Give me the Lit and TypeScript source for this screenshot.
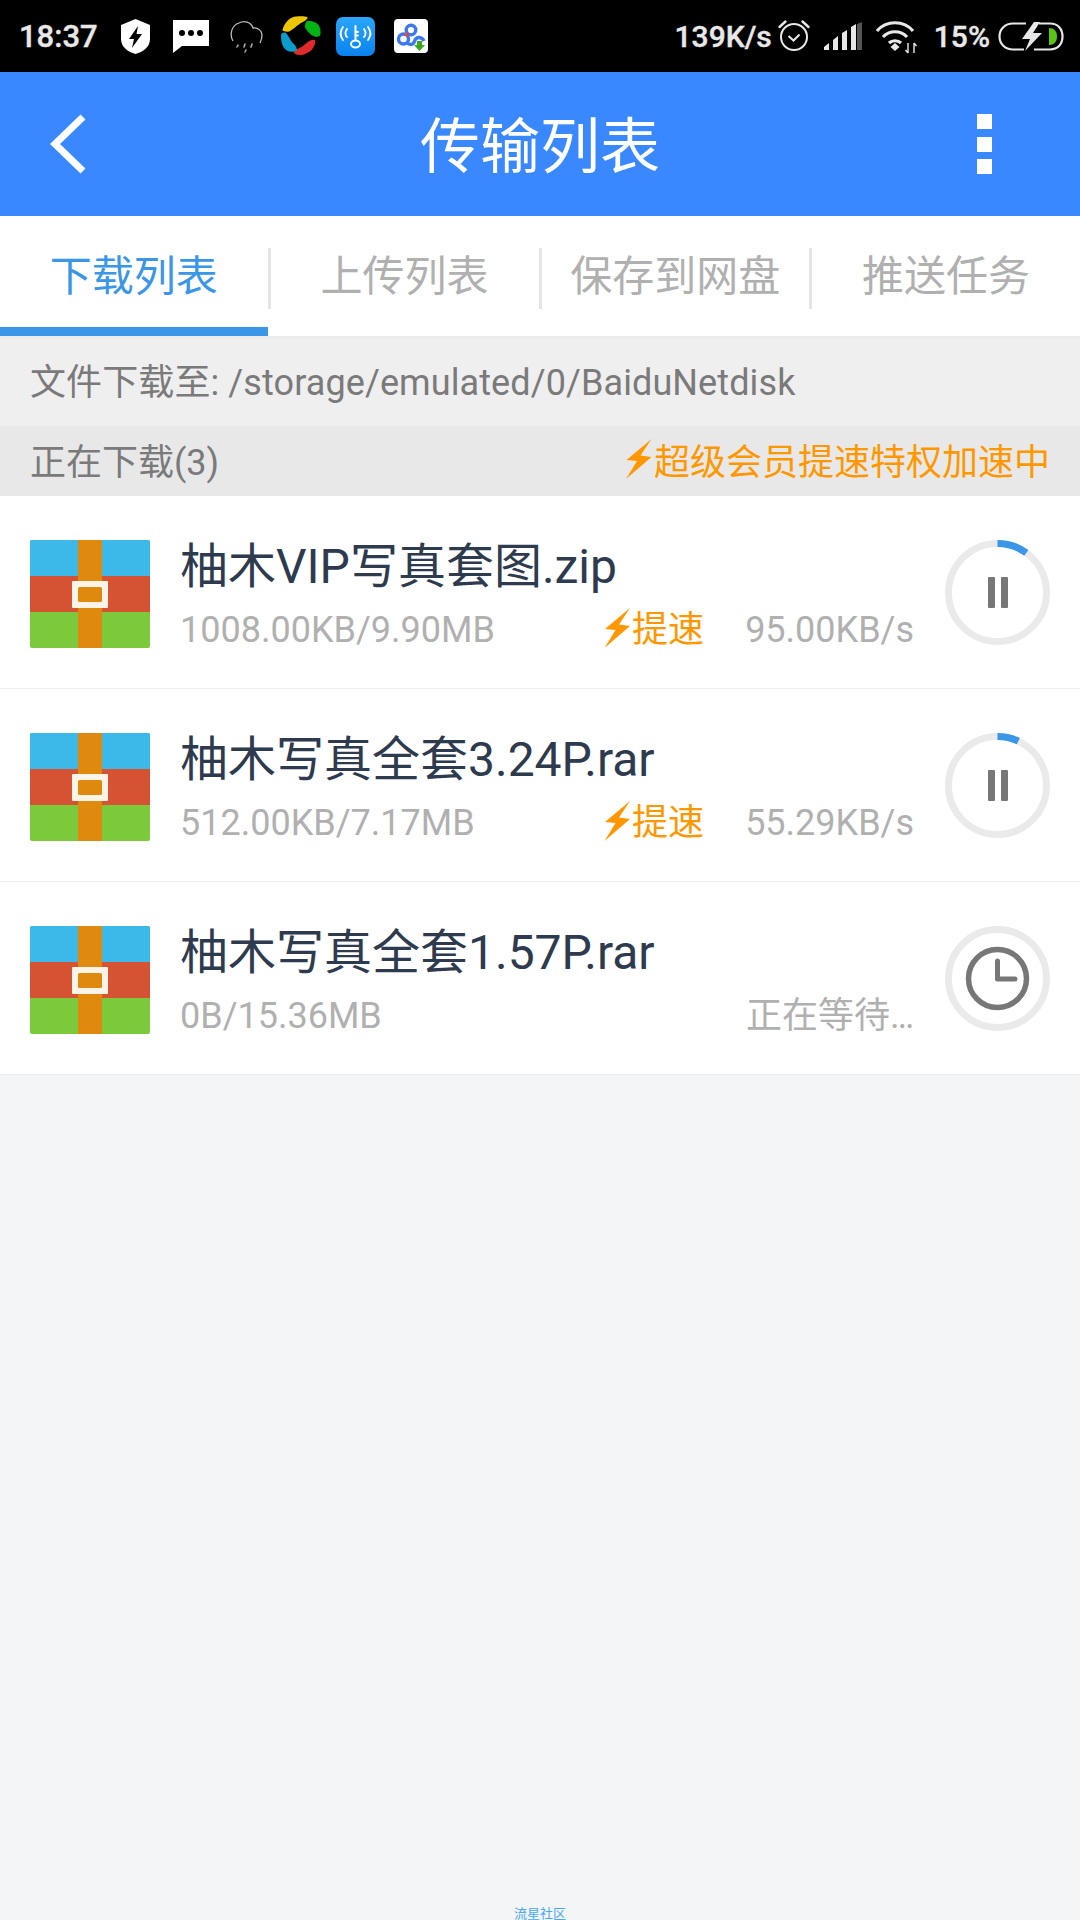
import { LitElement, html, css, svg } from "lit";
import { customElement } from "lit/decorators.js";

const bolt = () => html`<svg viewBox="0 0 26 40"><path fill="#ff9800" d="M25.5 0 0.5 21 11 22 0 40 25.5 18 14.5 16.5Z"/></svg>`;

const zip = html`<svg class="zip" viewBox="0 0 120 108">
  <rect width="120" height="108" rx="2" fill="#7dc93c"/>
  <path d="M0 36V2a2 2 0 0 1 2-2h116a2 2 0 0 1 2 2v34Z" fill="#3cb9e8"/>
  <rect y="36" width="120" height="36" fill="#d55232"/>
  <rect x="48" width="24" height="108" fill="#e0890f"/>
  <rect x="42" y="41" width="36" height="27" rx="1" fill="#fdf3e6"/>
  <rect x="48" y="47" width="24" height="15" rx="1.5" fill="#e0890f"/>
</svg>`;

function ring(pct: number) {
  const r = 49;
  const a = (pct * Math.PI * 2) / 100;
  const x = 52.5 + r * Math.sin(a);
  const y = 52.5 - r * Math.cos(a);
  return html`<svg class="ring" viewBox="0 0 105 105">
    <circle cx="52.5" cy="52.5" r=${r} fill="none" stroke="#eaeaea" stroke-width="7"/>
    <path d="M52.5 3.5A${r} ${r} 0 0 1 ${x} ${y}" fill="none" stroke="#3a96e6" stroke-width="7"/>
    <rect x="43" y="37" width="7" height="31" rx="1" fill="#777"/>
    <rect x="56" y="37" width="7" height="31" rx="1" fill="#777"/>
  </svg>`;
}

const clock = html`<svg class="ring" viewBox="0 0 105 105">
  <circle cx="52.5" cy="52.5" r="49" fill="none" stroke="#eaeaea" stroke-width="7"/>
  <circle cx="52.5" cy="52.5" r="29" fill="none" stroke="#777" stroke-width="5.5"/>
  <path d="M52.5 35V53H70" fill="none" stroke="#777" stroke-width="5" stroke-linecap="round" stroke-linejoin="round"/>
</svg>`;

const shield = svg`<path fill="#fff" d="M14.5 0 29 6V20C29 28 22 33 14.5 35 7 33 0 28 0 20V6Z"/><path fill="#000" d="M17 7 8 20H13L11 29 21 15H15.5Z"/>`;
const message = svg`<path fill="#fff" d="M0 0H36V26H9L0 33Z"/><circle cx="9" cy="13" r="3" fill="#000"/><circle cx="18" cy="13" r="3" fill="#000"/><circle cx="27" cy="13" r="3" fill="#000"/>`;
const cloud = svg`<path fill="none" stroke="#bbb" stroke-width="1.3" d="M4 21C0 14 3 5 10 3 15 0 22 2 24 8 29 7 33 11 33 15 33 19 32 21 31 23"/><path stroke="#aaa" stroke-width="1.6" stroke-linecap="round" d="M9 25 8 27M16 24 15 27M23 24 22 27M17 30 16 32"/>`;
const ball = svg`
  <path fill="#edc500" d="M1.400 14C4 5 10 1 15 .5 20 0 24 0 26.500 1.300 27 3 24 5 22 6 19 7 16 10 13.500 12 11 14 8 16 6.500 15.700 4 15.700 2 15 1.400 14Z"/>
  <path fill="#00b214" d="M26.500 4.700C31 4.700 35 6 37.600 9 39.500 12 40 16 39.300 19 38 21 36 21 34 20.700 31 19.500 29 18 27 15.700 25 13 23 11 24 9 24.500 7 25 5 26.500 4.700Z"/>
  <path fill="#e12a2a" d="M34 24C35 27 33 31 30.700 34 27 37 22 39.500 18.600 39 16 39 14 38 12.800 36.700 13 34.500 16 33 18.600 32 21 31 23 29 25.500 27 28 25 31 23 34 24Z"/>
  <path fill="#0a9ccb" d="M0 19C0 25 1 29 3 32 5 34.500 7.500 35.500 10 35.700 12.500 36 15 35.500 16 34 16 31.500 14 29 11.700 27 9 24 8 20 5 17 3 16 .5 17 0 19Z"/>`;
const wifiKey = svg`<defs><linearGradient id="kg" x1="0" y1="0" x2="0" y2="1"><stop offset="0" stop-color="#2aa6fb"/><stop offset="1" stop-color="#0a82ee"/></linearGradient></defs>
  <rect width="39" height="39" rx="7" fill="url(#kg)"/>
  <g fill="none" stroke="#fff" stroke-width="1.8" stroke-linecap="round"><path d="M7 10C4 14 4 19 7 23M32 10C35 14 35 19 32 23M11 12C9 15 9 18 11 20M28 12C30 15 30 18 28 20"/>
  <path d="M19.500 9V23" stroke-width="2"/><path d="M19.500 15H22M19.500 18.500H22"/><ellipse cx="19.500" cy="27" rx="4.500" ry="3.500" stroke-width="2"/></g>`;
const baidu = svg`<rect width="34" height="34" rx="4" fill="#fff"/>
  <g fill="none" stroke="#3b78f0" stroke-width="3.4"><circle cx="9.500" cy="20" r="5"/><circle cx="17" cy="11" r="4.800"/><path d="M13 24C17 27 20 25 21 21 23 17 28 18 30 22"/></g>
  <path stroke="#e24a3b" stroke-width="3.4" d="M11 14 14 17"/><path fill="#3aa81f" d="M23 22H28V26H31L25.500 32 20 26H23Z"/>`;
const alarm = svg`<g fill="none" stroke="#e8e8e8"><circle cx="16" cy="18" r="13" stroke-width="2"/><path stroke-width="2" d="M10.500 17 15.500 21.500 21.500 15.500"/><path stroke-width="2.400" stroke-linecap="round" d="M1.500 8 7.500 2.500M30.500 8 24.500 2.500"/></g>`;
const signal = svg`<path fill="#e8e8e8" d="M0 28V25L5 21V28ZM9 18 14 14V28H9ZM18 11 23 8V28H18ZM27 5 32 2V28H27Z"/><path fill="#555" d="M33 2 38 0V28H33Z"/>`;
const wifi = svg`<g fill="none" stroke="#e8e8e8" stroke-width="3.200"><path d="M1 11C10 0 28 0 37 11"/><path d="M7 17C13 10 25 10 31 17"/><path d="M13 23C16 20 22 20 25 23"/></g><path fill="#e8e8e8" d="M14.500 27 19 23 23.500 27 19 31Z"/><path stroke="#ddd" stroke-width="1.500" d="M32 23V33M38 23V33M29.500 30 32 33M40.500 26 38 23"/>`;
const battery = svg`<path fill="none" stroke="#e8e8e8" stroke-width="2.200" d="M28 1.500H15C7 1.500 1.500 7 1.500 14.500S7 27.500 15 27.500H26M36 27.500H52C60 27.500 64.500 22 64.500 14.500S60 1.500 52 1.500H41"/>
  <path fill="#e8e8e8" d="M36 0 24 17H32L27 29 44 11H35L42 0Z"/><path fill="#5cc317" d="M51 6C56 6 59 9 59 14.500S56 23 51 23Z"/>`;

const icons = [
  [shield, 29, 35],
  [message, 36, 33],
  [cloud, 33, 33],
  [ball, 40, 40],
  [wifiKey, 39, 39],
  [baidu, 34, 34],
] as const;

const rows = [
  { name: "柚木VIP写真套图.zip", size: "1008.00KB/9.90MB", speed: "95.00KB/s", boost: true, pct: 10 },
  { name: "柚木写真全套3.24P.rar", size: "512.00KB/7.17MB", speed: "55.29KB/s", boost: true, pct: 7 },
  { name: "柚木写真全套1.57P.rar", size: "0B/15.36MB", speed: "正在等待…", boost: false, pct: -1 },
];

@customElement("app-root")
export class AppRoot extends LitElement {
  static styles = css`
    :host {
      display: flex;
      flex-direction: column;
      width: 1080px;
      height: 1920px;
      overflow: hidden;
      background: #f4f5f7;
      font-family: Roboto, "Noto Sans CJK SC", sans-serif;
    }
    .status {
      height: 72px;
      background: #000;
      display: flex;
      align-items: center;
      color: #e8e8e8;
      font-size: 30px;
      font-weight: 500;
      -webkit-text-stroke: 0.4px #e8e8e8;
      padding: 0 16px 0 19px;
      flex: none;
    }
    .time { width: 89px; font-size: 31px; }
    .slot { width: 55px; display: flex; justify-content: center; align-items: center; }
    .slot svg, .sright svg { display: block; overflow: visible; }
    .sright { margin-left: auto; display: flex; align-items: center; }
    .alarm { width: 32px; height: 33px; margin: -2px 14px 0 6px; }
    .signal { width: 38px; height: 28px; margin: 0 14px 0 0; }
    .wifi { width: 42px; height: 33px; margin: 0 16px 0 0; }
    .battery { width: 66px; height: 29px; margin-left: 8px; }
    .bar {
      height: 144px;
      background: #3a88ff;
      display: grid;
      grid-template-columns: 1fr auto 1fr;
      align-items: center;
      color: #fff;
      font-size: 60px;
      flex: none;
      padding: 0 88px 0 50px;
      box-sizing: border-box;
    }
    .title { margin-bottom: 6px; transform: translateX(19px); }
    .back { width: 36px; height: 60px; display: block; }
    .dots { display: flex; flex-direction: column; gap: 7.500px; justify-self: end; }
    .dots i { display: block; width: 15px; height: 15px; background: #fff; }
    .tabs {
      height: 120px;
      background: #fff;
      border-bottom: 2px solid #eaeaea;
      display: flex;
      flex: none;
    }
    .tab {
      flex: 1;
      display: flex;
      align-items: center;
      justify-content: center;
      font-size: 42px;
      color: #b0b0b0;
      padding-top: 2px;
      border-bottom: 9px solid transparent;
      box-sizing: border-box;
    }
    .tab.on { color: #3a96e6; border-bottom-color: #3a96e6; }
    .sep { flex: none; width: 3px; height: 61px; margin-top: 32px; background: #e5e5e5; }
    .path {
      height: 88px;
      background: #efefef;
      display: flex;
      align-items: center;
      padding: 0 30px 6px;
      box-sizing: border-box;
      font-size: 36px;
      letter-spacing: 0.1px;
      color: #7a7a7a;
      flex: none;
    }
    .section {
      height: 70px;
      background: #e8e8e8;
      display: flex;
      align-items: center;
      justify-content: space-between;
      padding: 0 30px 4px;
      box-sizing: border-box;
      font-size: 36px;
      color: #7a7a7a;
      flex: none;
    }
    .promo { display: flex; align-items: center; color: #ff9800; font-size: 36px; }
    .promo svg { width: 26px; height: 40px; margin-right: 2px; display: block; }
    .row {
      height: 192px;
      background: #fff;
      border-bottom: 1px solid #ececec;
      display: flex;
      align-items: center;
      padding: 0 30px;
      flex: none;
    }
    .zip { width: 120px; height: 108px; flex: none; display: block; margin-top: 3px; }
    .info { flex: 1; min-width: 0; margin: 0 31px 0 30px; padding-top: 5px; }
    .name { font-size: 48px; line-height: 64px; color: #2e3a4d; }
    .meta {
      display: flex;
      align-items: center;
      font-size: 36px;
      line-height: 50px;
      color: #b0b0b0;
      margin-top: 6px;
    }
    .boost { margin-left: auto; display: flex; align-items: center; color: #ff9800; font-size: 36px; }
    .boost svg { width: 27px; height: 40px; margin: 0 1px 4px 0; display: block; }
    .speed { width: 210px; text-align: right; white-space: nowrap; flex: none; margin-left: auto; }
    .boost + .speed { margin-left: 0; }
    .ring { width: 105px; height: 105px; flex: none; display: block; }
    .fill { flex: 1; display: flex; flex-direction: column; justify-content: flex-end; align-items: center; }
    .mark { font-size: 13px; line-height: 13px; color: #4aa8f5; }
  `;

  render() {
    return html`
      <div class="status">
        <span class="time">18:37</span>
        ${icons.map(([g, w, h]) => html`<span class="slot"><svg width=${w} height=${h} viewBox="0 0 ${w} ${h}">${g}</svg></span>`)}
        <div class="sright">
          <span>139K/s</span>
          <svg class="alarm" viewBox="0 0 32 33">${alarm}</svg>
          <svg class="signal" viewBox="0 0 38 28">${signal}</svg>
          <svg class="wifi" viewBox="0 0 42 33">${wifi}</svg>
          <span>15%</span>
          <svg class="battery" viewBox="0 0 66 29">${battery}</svg>
        </div>
      </div>
      <div class="bar">
        <svg class="back" viewBox="0 0 36 60"><path d="M33 3 5 30 33 57" fill="none" stroke="#fff" stroke-width="7"/></svg>
        <span class="title">传输列表</span>
        <span class="dots"><i></i><i></i><i></i></span>
      </div>
      <div class="tabs">
        <div class="tab on">下载列表</div>
        <div class="sep"></div>
        <div class="tab">上传列表</div>
        <div class="sep"></div>
        <div class="tab">保存到网盘</div>
        <div class="sep"></div>
        <div class="tab">推送任务</div>
      </div>
      <div class="path">文件下载至: /storage/emulated/0/BaiduNetdisk</div>
      <div class="section">
        <span>正在下载(3)</span>
        <span class="promo">${bolt()}超级会员提速特权加速中</span>
      </div>
      ${rows.map((r) => html`
        <div class="row">
          ${zip}
          <div class="info">
            <div class="name">${r.name}</div>
            <div class="meta">
              <span>${r.size}</span>
              ${r.boost ? html`<span class="boost">${bolt()}提速</span>` : ""}
              <span class="speed">${r.speed}</span>
            </div>
          </div>
          ${r.pct >= 0 ? ring(r.pct) : clock}
        </div>
      `)}
      <div class="fill"><span class="mark">流星社区</span></div>
    `;
  }
}
